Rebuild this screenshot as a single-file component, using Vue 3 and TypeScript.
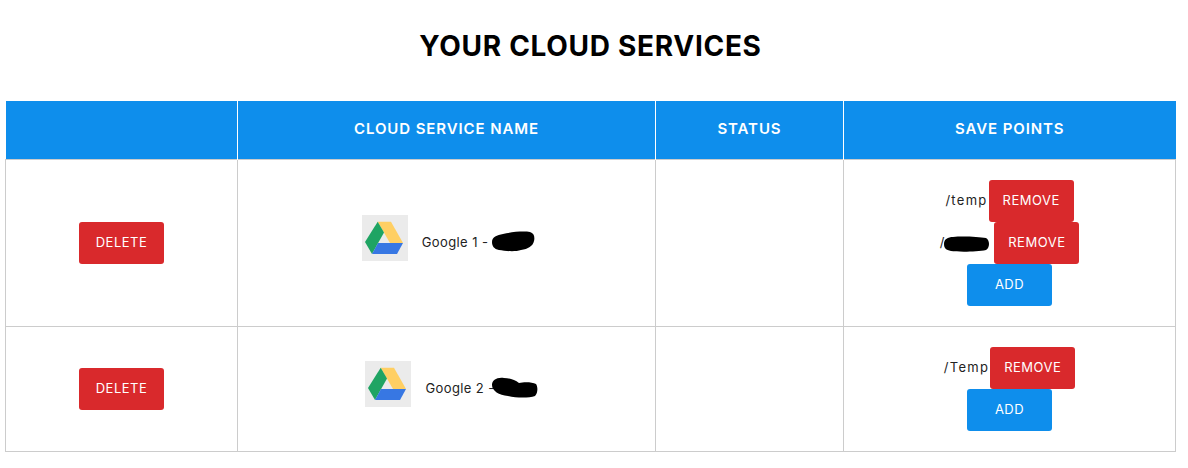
<script setup lang="ts">
interface SavePoint { prefix: string; redacted: boolean }
interface Service { name: string; blobClass: string; blobPath: string; blobBox: string; points: SavePoint[]; rowClass: string }

const services: Service[] = [
  {
    name: 'Google 1 -',
    blobClass: 'blob-one',
    blobBox: '0 0 44 21',
    blobPath: 'M1 11C1 6 6 4 12 3C20 1 32 0 39 1C43 2 44 6 43 10C42 15 37 18 30 19C24 21 14 20 8 19C3 18 1 15 1 11Z',
    rowClass: 'row-one',
    points: [
      { prefix: '/temp', redacted: false },
      { prefix: '/', redacted: true },
    ],
  },
  {
    name: 'Google 2 -',
    blobClass: 'blob-two',
    blobBox: '0 0 47 21',
    blobPath: 'M1 8C1 3 6 0 13 1C19 1 24 3 28 6C33 5 41 5 45 7C47 10 47 16 44 19C38 21 26 21 17 19C8 18 1 14 1 8Z',
    rowClass: 'row-two',
    points: [{ prefix: '/Temp', redacted: false }],
  },
]
</script>

<template>
  <main class="page">
    <h1 class="title">YOUR CLOUD SERVICES</h1>
    <table class="services">
      <colgroup>
        <col class="c1" />
        <col class="c2" />
        <col class="c3" />
        <col class="c4" />
      </colgroup>
      <thead>
        <tr>
          <th></th>
          <th>CLOUD SERVICE NAME</th>
          <th>STATUS</th>
          <th>SAVE POINTS</th>
        </tr>
      </thead>
      <tbody>
        <tr v-for="s in services" :key="s.name" :class="s.rowClass">
          <td><button class="btn red">DELETE</button></td>
          <td>
            <div class="service">
              <span class="logo">
                <svg viewBox="0 0 46 46" width="46" height="46">
                  <path d="M15.700 6.700H29L41 28H28Z" fill="#ffcf63" />
                  <path d="M15.700 6.700L22 17.500L10 39L3 27Z" fill="#1fa463" />
                  <path d="M16 28H41L35 39H10Z" fill="#3777e3" />
                </svg>
              </span>
              <span class="name">{{ s.name }}</span>
              <svg class="blob" :class="s.blobClass" :viewBox="s.blobBox">
                <path :d="s.blobPath" fill="#000" />
              </svg>
            </div>
          </td>
          <td></td>
          <td>
            <div v-for="p in s.points" :key="p.prefix" class="point">
              <span class="path" :class="{ short: p.redacted }">{{ p.prefix }}</span>
              <svg v-if="p.redacted" class="blob blob-path" viewBox="0 0 47 16">
                <path d="M1 8C1 3 5 1 10 1C20 0 36 1 43 2C47 4 47 12 43 14C34 16 14 16 8 15C3 14 1 12 1 8Z" fill="#000" />
              </svg>
              <button class="btn red tall">REMOVE</button>
            </div>
            <div class="point"><button class="btn blue tall">ADD</button></div>
          </td>
        </tr>
      </tbody>
    </table>
  </main>
</template>

<style scoped>
.page {
  width: 1188px;
  height: 468px;
  padding: 29px 12px 0 5px;
  box-sizing: border-box;
  font-family: Inter, "Liberation Sans", sans-serif;
  background: #fff;
  overflow: hidden;
}
.title {
  margin: 0 0 54px;
  height: 18px;
  line-height: 34px;
  text-align: center;
  font-size: 28px;
  font-weight: 700;
  letter-spacing: 0.7px;
  color: #000;
}
.services {
  width: 1170px;
  table-layout: fixed;
  border-collapse: collapse;
  font-size: 13px;
  color: #222;
}
.c1 { width: 232px; }
.c2 { width: 418px; }
.c3 { width: 188px; }
.c4 { width: 332px; }
th {
  height: 58px;
  padding: 0 0 2px;
  box-sizing: border-box;
  background: #0e8eec;
  color: #fff;
  font-size: 15px;
  font-weight: 600;
  letter-spacing: 0.9px;
  border-left: 1px solid #fff;
  border-right: 1px solid #fff;
}
th:first-child { border-left: 0; }
th:last-child { border-right: 0; }
td {
  padding: 0;
  text-align: center;
  vertical-align: middle;
  border: 1px solid #ccc;
}
.row-one td { height: 166px; }
.row-two td { height: 124px; }
.btn {
  width: 85px;
  height: 42px;
  padding: 0 0 2px;
  border: 0;
  border-radius: 3px;
  color: #fff;
  font-family: inherit;
  font-size: 13px;
  font-weight: 400;
  letter-spacing: 0.5px;
}
.red { background: #d9292c; }
.blue { background: #0e8eec; }
.service {
  display: flex;
  align-items: center;
  justify-content: center;
  padding-left: 4px;
  letter-spacing: 0.4px;
}
.row-two .service { padding-left: 10px; }
.logo {
  width: 46px;
  height: 46px;
  background: #ebebeb;
  margin: 0 14px 10px 0;
  display: block;
}
.logo svg { display: block; }
.name { white-space: nowrap; padding-bottom: 2px; }
.blob { display: block; }
.blob-one {
  width: 44px;
  height: 21px;
  margin: 0 0 2px 3px;
}
.blob-two {
  width: 47px;
  height: 21px;
  margin: 0 0 2px -4px;
}
.blob-path {
  width: 47px;
  height: 16px;
  margin: 2px 4px 0 0;
  flex: none;
}
.point {
  height: 42px;
  display: flex;
  align-items: center;
  justify-content: center;
}
.path { margin-right: 1px; padding-bottom: 2px; letter-spacing: 1.3px; }
.path.short { margin-right: -1px; letter-spacing: 0; }
</style>
